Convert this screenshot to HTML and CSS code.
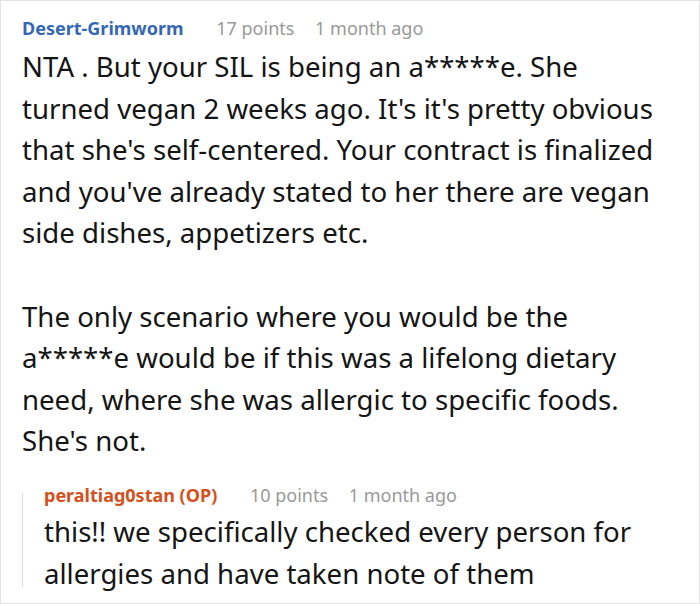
FILE: index.html
```html
<!DOCTYPE html>
<html>
<head>
<meta charset="utf-8">
<link rel="stylesheet" href="styles.css">
</head>
<body>
<div class="comment">
  <div class="meta">
    <span class="author">Desert-Grimworm</span>
    <span class="points">17 points</span>
    <span class="time">1 month ago</span>
  </div>
  <div class="text">
    <p>NTA . But your SIL is being an a*****e. She turned vegan 2 weeks ago. It's it's pretty obvious that she's self-centered. Your contract is finalized and you've already stated to her there are vegan side dishes, appetizers etc.</p>
    <p>The only scenario where you would be the a*****e would be if this was a lifelong dietary need, where she was allergic to specific foods. She's not.</p>
  </div>
  <div class="reply">
    <div class="rail"></div>
    <div class="reply-body">
      <div class="meta">
        <span class="author op">peraltiag0stan (OP)</span>
        <span class="points">10 points</span>
        <span class="time">1 month ago</span>
      </div>
      <div class="text reply-text">
        <p>this!! we specifically checked every person for allergies and have taken note of them</p>
      </div>
    </div>
  </div>
</div>
</body>
</html>
```
FILE: styles.css
```css
html, body {
  margin: 0;
  padding: 0;
  background: #fff;
}
.comment {
  box-sizing: border-box;
  width: 700px;
  height: 604px;
  border: 1px solid #e4e4e4;
  padding: 15px 34px 0 21px;
  overflow: hidden;
  font-family: "Noto Sans", "Open Sans", sans-serif;
}
.meta {
  font-size: 18px;
  line-height: 24px;
  height: 24px;
  white-space: nowrap;
}
.author {
  font-weight: bold;
  color: #3567b5;
}
.author.op {
  color: #d5501c;
}
.points {
  color: #999;
  margin-left: 28px;
}
.time {
  color: #999;
  margin-left: 16px;
}
.text {
  margin-top: 6px;
  font-size: 27.6px;
  line-height: 41.5px;
  color: #151515;
}
.text p {
  margin: 0;
}
.text p + p {
  margin-top: 42px;
}
.reply {
  display: flex;
  margin-top: 21px;
}
.rail {
  width: 1px;
  height: 94px;
  margin-top: 10px;
  background: #dcdcdc;
  flex: none;
}
.reply-body {
  padding-left: 21px;
}
.reply-text {
  margin-top: 3px;
  line-height: 42px;
}
```
